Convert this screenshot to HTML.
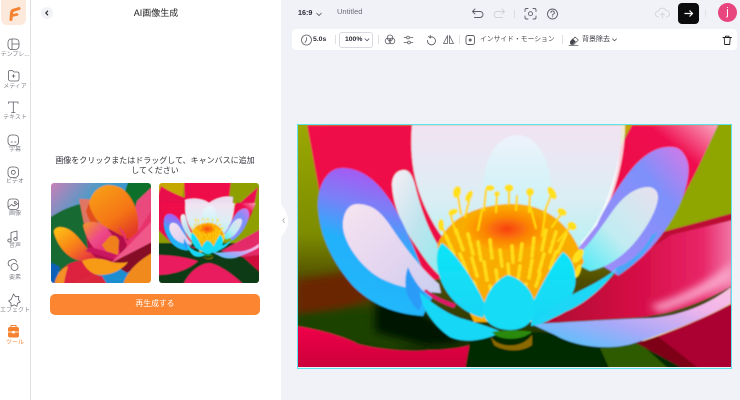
<!DOCTYPE html>
<html lang="ja"><head><meta charset="utf-8"><title>AI画像生成</title>
<style>
*{box-sizing:border-box}
html,body{margin:0;padding:0;width:740px;height:400px;overflow:hidden;background:#f1f2f7;font-family:"Liberation Sans","Noto Sans CJK JP",sans-serif;color:#222}
.abs{position:absolute}
#side{left:0;top:0;width:31px;height:400px;background:#fff;border-right:1.5px solid #dfe0e4}
#panel{left:31px;top:0;width:250px;height:400px;background:#fff}
.lbl{position:absolute;left:0;width:30px;text-align:center;font-size:6px;line-height:8px;color:#85878f;white-space:nowrap;overflow:hidden}
svg{position:absolute;overflow:visible}
.ic{fill:none;stroke:#5c5e66;stroke-width:.8;stroke-linecap:round;stroke-linejoin:round}
.t{position:absolute;white-space:nowrap}
.sep{position:absolute;width:1px;background:#dfe0e5}
</style></head><body>

<div class="abs" id="side"></div>
<div class="abs" id="panel"></div>

<!-- logo -->
<div class="abs" style="left:1px;top:0;width:25px;height:25px;background:#fde8dc;border-radius:0 0 6px 6px"></div>
<svg style="left:0;top:0" width="30" height="30"><path d="M11 19.500L11.600 12.500Q12 10.500 14 10L19 8.500" fill="none" stroke="#f58230" stroke-width="3" stroke-linecap="round"/><path d="M12 15.500L17 14.500" fill="none" stroke="#f58230" stroke-width="2.600" stroke-linecap="round"/></svg>

<!-- sidebar icons -->
<svg style="left:0;top:0" width="30" height="350" class="ic">
<rect x="8" y="39" width="11" height="10.500" rx="3.500"/><path d="M12 39v10.500M12 44h7"/>
<path d="M8.500 72a1.500 1.500 0 0 1 1.500-1.500h2.500l1.500 1.500h3.500a1.500 1.500 0 0 1 1.500 1.500v5.500a2 2 0 0 1-2 2h-6.500a2 2 0 0 1-2-2z"/><path d="M13.500 74.500v3M12 76h3"/>
<path d="M8.500 103.500v-1.500h9.500v1.500M13.300 102v10.500M11.500 112.500h3.600"/>
<rect x="8" y="135" width="10.500" height="10.500" rx="3.500"/><path d="M11 142h1.500M14.500 142h1.500"/>
<rect x="8" y="167" width="10.500" height="10.500" rx="3.500"/><circle cx="13.300" cy="172.300" r="2"/>
<rect x="8" y="199" width="10.500" height="10.500" rx="3"/><circle cx="15.200" cy="202.500" r="1"/><path d="M8.500 207l3-2.500 2.500 1.500 4-2.500"/>
<path d="M11 240v-7.500l6-1.500v7.500"/><ellipse cx="9.500" cy="240.500" rx="1.700" ry="1.500"/><ellipse cx="15.500" cy="239" rx="1.700" ry="1.500"/>
<path d="M9.500 266a3.200 3.200 0 0 1 1.500-5.800 3.300 3.300 0 0 1 5.500 1.800"/><circle cx="14.500" cy="267" r="3.500"/>
<path d="M13.500 294l2 2.800 3.300-.4-.3 3.300 1.800 2.300-2.800 1.300-.6 3-2.700-1.400-3.100 1.400-.2-3.200-2.300-2.100 2.600-1.600z"/>
</svg>
<svg style="left:0;top:0" width="30" height="350"><path d="M8 329a2 2 0 0 1 2-2h7a2 2 0 0 1 2 2v6.500a2 2 0 0 1-2 2h-7a2 2 0 0 1-2-2z" fill="#f58230"/><path d="M11 327v-1.500h5v1.500" fill="none" stroke="#f58230"/><path d="M8 332h11" stroke="#fff" stroke-width=".8"/><rect x="12.300" y="331" width="2.400" height="2.400" fill="#fff"/></svg>
<div class="lbl" style="top:51px">テンプレ...</div>
<div class="lbl" style="top:83px">メディア</div>
<div class="lbl" style="top:114px">テキスト</div>
<div class="lbl" style="top:146px">字幕</div>
<div class="lbl" style="top:178px">ビデオ</div>
<div class="lbl" style="top:210px">画像</div>
<div class="lbl" style="top:242px">音声</div>
<div class="lbl" style="top:274px">要素</div>
<div class="lbl" style="top:307px">エフェクト</div>
<div class="lbl" style="top:339px;color:#f58230">ツール</div>

<!-- panel -->
<div class="abs" style="left:41px;top:7px;width:12px;height:12px;border-radius:50%;background:#f1f2f6"></div>
<svg style="left:41px;top:7px" width="12" height="12"><path d="M7 3.800L4.800 6 7 8.200" fill="none" stroke="#222" stroke-width="1.100"/></svg>
<div class="t" style="left:31px;width:250px;top:7px;text-align:center;font-size:9px;line-height:12px;color:#222">AI画像生成</div>
<div class="t" style="left:52px;width:206px;top:156px;text-align:center;font-size:8px;line-height:10px;color:#33353b;white-space:normal">画像をクリックまたはドラッグして、キャンバスに追加してください</div>

<!-- thumb 1 -->
<svg style="left:51px;top:183px;border-radius:3px;overflow:hidden" width="100" height="100" viewBox="0 0 100 100">
<defs>
<linearGradient id="a1" x1="0" y1="0" x2=".7" y2=".6"><stop offset="0" stop-color="#d67cb8"/><stop offset=".45" stop-color="#4a9cc6"/><stop offset="1" stop-color="#1a8ed0"/></linearGradient>
<linearGradient id="a2" x1="0" y1="0" x2=".6" y2="1"><stop offset="0" stop-color="#f9a51c"/><stop offset=".65" stop-color="#f57414"/><stop offset="1" stop-color="#e23a28"/></linearGradient>
<linearGradient id="a3" x1="0" y1="0" x2="1" y2="1"><stop offset="0" stop-color="#ffc80f"/><stop offset=".5" stop-color="#f8801a"/><stop offset="1" stop-color="#e01c4c"/></linearGradient>
<linearGradient id="a4" x1="0" y1="0" x2="1" y2="1"><stop offset="0" stop-color="#f79a20"/><stop offset=".4" stop-color="#ee4a8a"/><stop offset="1" stop-color="#d8145e"/></linearGradient>
<linearGradient id="a5" x1="0" y1="0" x2="1" y2="1"><stop offset="0" stop-color="#e01c44"/><stop offset="1" stop-color="#d82a38"/></linearGradient>
<filter id="s1"><feGaussianBlur stdDeviation=".5"/></filter>
</defs>
<g filter="url(#s1)">
<rect x="-3" y="-3" width="106" height="106" fill="url(#a1)"/>
<path d="M78 -3h25v22L88 30 72 14z" fill="#0f6f2c"/>
<path d="M-3 36C8 28 22 22 34 20L44 60 30 80 10 90-3 78z" fill="#136b32"/>
<path d="M-3 78l12 6-6 19h-6z" fill="#0f60b8"/>
<path d="M28 16c4 0 12 0 16 1L46 50 34 46z" fill="#df7664"/>
<path d="M34 44L86 48 90 78 40 88z" fill="#b00c48"/>
<path d="M103 2L86 18 80 40 84 62 103 50z" fill="#ea4a7e"/>
<path d="M56 2C46 4 41 10 38 20 40 32 48 42 60 47L84 60C91 42 87 20 73 7 68 3 62 2 56 2z" fill="url(#a2)"/>
<path d="M38 20c2 12 12 24 22 30l6 14c-12-6-28-22-31-36z" fill="#e2501f"/>
<path d="M32 42c8-6 20-3 26 6 6 8 10 18 12 24l-6 4c-14 0-28-14-32-34z" fill="url(#a4)"/>
<path d="M9 44c-4 0-7 3-6 6 3 12 14 28 30 28l14-2C34 68 26 44 9 44z" fill="url(#a3)"/>
<path d="M58 54c4-3 9-1 10 4l-1 14-12-4-4-6z" fill="#f0801c"/>
<path d="M68 44l8 18-6 14c-3 3-6 3-10 5 12 2 28-6 40-20V28L86 50 76 58C74 50 72 47 68 44z" fill="#e8306c"/>
<path d="M103 36L78 62 60 80c14 0 30-12 43-22z" fill="#f0588a"/>
<path d="M60 80l43-22v14L76 90z" fill="#860a28"/>
<path d="M31 78c8-4 20-3 30 1 6 1 12 1 16 0-6 8-16 13-28 13-8 0-15-6-18-14z" fill="#f79a18"/>
<path d="M3 103c2-14 14-26 28-25 4 8 10 14 20 15l6 10z" fill="url(#a5)"/>
<path d="M3 103c2-12 8-18 14-20-2 8-4 14-4 20z" fill="#f39028"/>
<path d="M72 103c1-10 12-24 31-34v34z" fill="#f08a1c"/>
<path d="M34 68l26 8 6-4-26-8z" fill="#c8145e"/>
</g>
</svg>

<!-- flower master -->
<svg width="0" height="0" style="position:absolute"><defs>
<filter id="soft" x="-5%" y="-5%" width="110%" height="110%"><feGaussianBlur stdDeviation=".7"/></filter>
<filter id="soft3" x="-50%" y="-50%" width="200%" height="200%"><feGaussianBlur stdDeviation="4"/></filter>
<linearGradient id="olive" x1="0" y1="0" x2="0" y2="1"><stop offset="0" stop-color="#9ba800"/><stop offset=".45" stop-color="#7b8c00"/><stop offset=".64" stop-color="#504c00"/><stop offset="1" stop-color="#042a02"/></linearGradient>
<linearGradient id="red1" x1="0" y1="0" x2="1" y2="1"><stop offset="0" stop-color="#f0104a"/><stop offset="1" stop-color="#ea0a46"/></linearGradient>
<linearGradient id="red2" x1="0" y1="0" x2="1" y2="0"><stop offset="0" stop-color="#a8052e"/><stop offset=".5" stop-color="#d40a44"/><stop offset=".85" stop-color="#e82668"/><stop offset="1" stop-color="#f27aa8"/></linearGradient>
<linearGradient id="redT" x1="0" y1="1" x2="1" y2="0"><stop offset="0" stop-color="#e4003e"/><stop offset=".75" stop-color="#f01050"/><stop offset="1" stop-color="#f9a8c4"/></linearGradient>
<linearGradient id="redB" x1="0" y1="0" x2="0" y2="1"><stop offset="0" stop-color="#f0044a"/><stop offset="1" stop-color="#c90638"/></linearGradient>
<linearGradient id="white" x1="0" y1="0" x2="0" y2="1"><stop offset="0" stop-color="#f2e2f2"/><stop offset=".55" stop-color="#dcedf4"/><stop offset="1" stop-color="#b0f2f2"/></linearGradient>
<linearGradient id="inner" x1="0" y1="0" x2="0" y2="1"><stop offset="0" stop-color="#eef2fb"/><stop offset="1" stop-color="#bdf3f5"/></linearGradient>
<linearGradient id="purpL" x1=".7" y1="0" x2=".5" y2="1"><stop offset="0" stop-color="#b54cf0"/><stop offset=".3" stop-color="#7a80f8"/><stop offset=".55" stop-color="#22b0fb"/><stop offset="1" stop-color="#1fb8fb"/></linearGradient>
<linearGradient id="purpR" x1="1" y1="0" x2="0" y2="1"><stop offset="0" stop-color="#d878e8"/><stop offset=".3" stop-color="#7d90fa"/><stop offset=".8" stop-color="#9a8cf8"/><stop offset="1" stop-color="#c088f0"/></linearGradient>
<linearGradient id="paleL" x1="0" y1="0" x2="1" y2="1"><stop offset="0" stop-color="#f6e4f0"/><stop offset=".6" stop-color="#e2d4f0"/><stop offset="1" stop-color="#c6cff0"/></linearGradient>
<linearGradient id="paleR" x1="1" y1="0" x2="0" y2="1"><stop offset="0" stop-color="#e8e0ee"/><stop offset=".55" stop-color="#c0ecf2"/><stop offset="1" stop-color="#40eaf6"/></linearGradient>
<linearGradient id="small" x1="0" y1="0" x2="1" y2="1"><stop offset="0" stop-color="#f7eef5"/><stop offset=".5" stop-color="#bfe4ee"/><stop offset="1" stop-color="#8debee"/></linearGradient>
<linearGradient id="band" x1="0" y1="1" x2="1" y2="0"><stop offset="0" stop-color="#3fc8fb"/><stop offset=".4" stop-color="#a9a8f8"/><stop offset=".75" stop-color="#f2b4ea"/><stop offset="1" stop-color="#fbc3e0"/></linearGradient>
<linearGradient id="cy" x1="0" y1="0" x2="0" y2="1"><stop offset="0" stop-color="#0ce4f8"/><stop offset="1" stop-color="#1ad6f5"/></linearGradient>
<radialGradient id="org" cx=".5" cy=".5" r=".5"><stop offset="0" stop-color="#f8400f"/><stop offset=".55" stop-color="#fb8505"/><stop offset="1" stop-color="#fca800"/></radialGradient>
<clipPath id="clipM"><rect x="298" y="125" width="433" height="242"/></clipPath>

<g id="flower">
<path d="M632 125h86l-21 45-22 42-16 25-40 1-40-20 30-50z" fill="url(#redT)"/>
<path d="M622 125h10l-8 12z" fill="#c9a200"/>
<path d="M307 125h112l40 150-50 10-50-45-40-50z" fill="url(#red1)"/>
<path d="M505 125h25l-14 8z" fill="#f0104a"/>
<path d="M412 125c-2 25 0 50 10 75 8 20 20 40 36 55l120-5c20-18 34-50 40-85 2-15 4-30 4-40z" fill="url(#white)"/>
<path d="M622 125c-1 30-8 60-22 90-5 10-12 20-20 28l2 1c10-10 18-20 23-30 13-30 20-60 20-89z" fill="#fff" opacity=".8"/>
<path d="M483 190c0-30 14-55 34-55s34 25 34 55c0 20-10 40-34 40s-34-20-34-40z" fill="url(#inner)"/>
<path d="M404 170c-8 0-12 7-12 15 1 20 10 42 22 58 7 10 14 22 25 32l6-20c-14-18-22-40-28-62-3-13-6-23-13-23z" fill="url(#small)"/>
<path d="M342 168c-15 0-25 18-24 40 2 30 15 55 35 78 18 18 40 28 70 30l10-20-20-50c-15-35-35-78-71-78z" fill="url(#purpL)"/>
<path d="M357 204C347 204 342 216 343 228 345 245 362 268 380 278 395 286 420 292 441 293L439 284C425 272 411 256 396 234 384 216 376 204 357 204z" fill="url(#paleL)"/>
<path d="M408 267c-3 8-3 16-2 24 3 9 7 14 13 20l6-18c-8-8-13-16-17-26z" fill="#2b9cf8"/>
<path d="M424 291c8 8 18 13 30 17l2-4c-10-3-22-8-30-15z" fill="#e01866"/>
<path d="M672 147c-15-1-30 8-45 28-12 16-25 38-30 50l-20 25 40 25c20-10 45-35 60-65 10-20 14-40 10-50-3-8-8-13-15-13z" fill="url(#purpR)"/>
<path d="M648 187c-10 0-22 6-34 22-10 14-22 32-32 42l-8 12 16 8c20-4 38-18 52-38 10-14 16-28 16-36 0-6-4-10-10-10z" fill="url(#paleR)"/>
<path d="M658 232c-10 18-22 32-40 44l-3-8c18-6 30-20 37-33z" fill="#3aacf8" opacity=".8"/>
<!-- stamens -->
<path d="M437 246c8-22 30-40 70-42 40-2 66 22 77 58l-40 60h-70z" fill="#f8ac04"/>
<ellipse cx="507" cy="229" rx="42" ry="22" fill="url(#org)"/>
<g stroke="#ffd60a" stroke-width="2.300" stroke-linecap="round" fill="none">
<path d="M458 192c0 5 1 12 3 22M470 197l-5 20M486 190l-2 20M497 192l-1 20M509 188v16M517 196l-1 14M530 192l-1 20M552 193l-8 20M562 213l-10 14M572 225l-14 16M450 212l6 22M441 224l8 20M482 210l-4 20M530 206l6 22M546 208l-4 28"/>
</g>
<g stroke="#ffdc14" stroke-width="3.600" stroke-linecap="round" stroke-dasharray="5 3" fill="none">
<path d="M446 236l8 18M456 230l7 20M468 234l5 20M478 242l3 18M490 240l2 18M500 250l2 16M512 246l1 16M522 244l-2 16M534 238l-2 18M546 230l-4 20M556 232l-6 20M566 234l-8 18M460 254l7 18M472 258l5 18M484 262l3 18M496 270l2 14M508 264l1 12M520 266l-2 14M532 260l-3 18M544 254l-5 18M556 252l-6 16M474 282l4 12M490 286l2 8M526 284l-2 8M540 274l-4 12"/>
</g>
<g fill="#ffe01a">
<ellipse cx="457" cy="192" rx="4" ry="6" transform="rotate(15 457 192)"/><ellipse cx="469" cy="196" rx="3" ry="6" transform="rotate(30 469 196)"/><ellipse cx="490" cy="188" rx="4.500" ry="3"/><ellipse cx="497" cy="194" rx="3" ry="2.500"/><ellipse cx="509" cy="188" rx="4.500" ry="3.800"/><ellipse cx="530" cy="192" rx="4" ry="4"/><ellipse cx="552" cy="193" rx="3.500" ry="7" transform="rotate(-30 552 193)"/><ellipse cx="562" cy="212" rx="5" ry="3.500" transform="rotate(30 562 212)"/><ellipse cx="572" cy="226" rx="5" ry="4" transform="rotate(30 572 226)"/><ellipse cx="453" cy="212" rx="5" ry="3" transform="rotate(-20 453 212)"/><ellipse cx="441" cy="225" rx="3" ry="6"/><ellipse cx="578" cy="256" rx="4" ry="8" transform="rotate(35 578 256)"/><ellipse cx="578" cy="271" rx="2.500" ry="7" transform="rotate(20 578 271)"/>
</g>
<!-- bottom band -->
<path d="M531 324c30-1 80-5 120-6 30-2 60-15 80-31v16c-25 15-60 28-96 40-25 8-60 4-80-8z" fill="url(#band)"/>
<!-- cyan petals -->
<path d="M442 243c-6 5-7 20-2 35 6 18 22 35 43 40l2-14c-10-22-28-50-43-61z" fill="url(#cy)"/>
<path d="M563 252c-8 8-20 30-30 50l-2 24c22-3 38-18 44-40 2-12-2-28-12-34z" fill="url(#cy)"/>
<path d="M618 267C610 280 590 302 565 312 555 318 545 322 532 324L562 300C580 290 605 280 618 267z" fill="#1bd7f6"/>
<path d="M420 292c1 16 14 34 30 45 16 7 36 3 52-5-12-5-28-10-42-14-16-6-30-16-40-26z" fill="#17d8f6"/>
<path d="M508 275c-12 4-24 20-25 36 1 12 13 19 27 19 14 0 25-8 25-22 0-15-12-29-27-33z" fill="#12dcf5"/>
<path d="M492 332c5 8 28 10 40 0-6-2-32-2-40 0z" fill="#2a8a10"/>
<path d="M490 335c5 12 30 16 42 0l0 10c-10 8-30 6-38 0z" fill="#8a6a00"/>
</g>
</defs></svg>

<!-- thumb 2 -->
<svg style="left:159px;top:183px;border-radius:3px;overflow:hidden" width="100" height="100" viewBox="0 0 100 100">
<defs><clipPath id="cT"><rect width="100" height="100"/></clipPath></defs>
<g clip-path="url(#cT)"><g filter="url(#s1)">
<rect x="-2" y="-2" width="104" height="104" fill="#8f9f00"/>
<path d="M-2-2h28l-4 24H-2z" fill="#c4a800"/>
<path d="M25-2h47l-3 26H26z" fill="#ef0a4a"/>
<path d="M2 3L-2 16v30l16 16 16-14 12-28C28 16 12 10 2 3z" fill="#e80c4c"/>
<path d="M99 4L72 28 74 50 88 36 96 18z" fill="#ea1050"/>
<path d="M-2 60h104v42H-2z" fill="#0e3a12"/>
<path d="M-2 72c14 0 28 2 41 6-8 8-24 14-41 14z" fill="#ea1a5e"/>
<path d="M24 102c6-14 18-22 27-22 10 2 24 12 34 22z" fill="#e81c5e"/>
<path d="M102 46L62 68l22 6 18-2z" fill="#e42a68"/>
<path d="M102 72v18l-18-16z" fill="#cf0a3e"/>
<path d="M26 17C35 14 45 16 50 20 55 16 65 12 74 14L72 44 62 50H38L28 44z" fill="#ecdcf0"/>
</g>
<g filter="url(#s1)"><g transform="translate(0 20) scale(.2309 .25) translate(-298 -125)"><use href="#flower"/></g></g>
</g>
</svg>

<!-- regenerate button -->
<div class="abs" style="left:50px;top:294px;width:210px;height:21px;background:#fb8530;border-radius:5px;color:#fff;font-size:7.800px;line-height:20px;text-align:center">再生成する</div>

<!-- collapse handle -->
<svg style="left:281px;top:204px" width="8" height="34"><path d="M0 0c2 4 7 8 7 17s-5 13-7 17z" fill="#fff"/><path d="M3.500 14L1.800 16.500l1.700 2.500" fill="none" stroke="#aaa" stroke-width=".8"/></svg>

<!-- top bar -->
<div class="t" style="left:298px;top:8px;font-size:7.200px;line-height:10px;font-weight:bold;color:#2a2c33">16:9</div>
<svg style="left:315px;top:10px" width="8" height="8"><path d="M1.500 3L4 5.500 6.500 3" fill="none" stroke="#555" stroke-width=".8"/></svg>
<div class="t" style="left:337px;top:7px;font-size:7.500px;line-height:10px;color:#6a6d76">Untitled</div>
<svg style="left:0;top:0" width="740" height="60" class="ic">
<g stroke-width=".9"><path d="M473 11.500h7a3 3 0 0 1 0 6h-5.500M475 9L472.500 11.500l2.500 2.500"/></g>
<g stroke="#c8cad0"><path d="M504 11.500h-7a3 3 0 0 0 0 6h5.500M502 9l2.500 2.500-2.500 2.500"/></g>
<path d="M514.500 10v8" stroke="#d5d6db"/>
<g stroke-width=".9"><path d="M525 11.500V10a1.500 1.500 0 0 1 1.500-1.500H528M533 8.500h1.500A1.500 1.500 0 0 1 536 10v1.500M536 16v1.500a1.500 1.500 0 0 1-1.500 1.500H533M528 19h-1.500a1.500 1.500 0 0 1-1.500-1.500V16"/><circle cx="530.500" cy="13.700" r="2"/></g>
<g stroke-width=".9"><circle cx="552.500" cy="14" r="5"/><path d="M550.900 12.600a1.700 1.700 0 1 1 2.400 1.600c-.6.300-.8.600-.8 1.100"/><path d="M552.500 16.700v.2"/></g>
<path d="M658.500 17a3 3 0 0 1 0-6 4 4 0 0 1 7.500-.5 3 3 0 0 1 .5 6.500M662.500 18v-4.500M660.500 15l2-2 2 2" stroke="#ced0d5"/>
<path d="M705.500 10v7" stroke="#dcdde2"/>
</svg>
<div class="abs" style="left:678px;top:3px;width:21px;height:21px;background:#0b0b0d;border-radius:4px"></div>
<svg style="left:678px;top:3px" width="21" height="21"><path d="M6.500 10.500h8M11.500 7.500l3 3-3 3" fill="none" stroke="#fff" stroke-width="1.200"/></svg>
<div class="abs" style="left:718px;top:3px;width:19px;height:19px;border-radius:50%;background:#e8457f;color:#fff;font-size:11px;line-height:18px;text-align:center">j</div>

<!-- toolbar -->
<div class="abs" style="left:292px;top:29px;width:445px;height:21px;background:#fff;border-radius:4px"></div>
<div class="t" style="left:313px;top:35px;font-size:6.800px;line-height:10px;font-weight:bold;color:#2a2c33">5.0s</div>
<div class="sep" style="left:335px;top:35px;height:9px"></div>
<div class="abs" style="left:339px;top:32px;width:34px;height:16px;border:1px solid #d9dae0;border-radius:3px"></div>
<div class="t" style="left:345px;top:35px;font-size:6.800px;line-height:10px;font-weight:bold;color:#2a2c33">100%</div>
<div class="sep" style="left:378px;top:35px;height:9px"></div>
<div class="sep" style="left:459px;top:35px;height:9px"></div>
<div class="t" style="left:480px;top:34px;font-size:6.800px;line-height:11px;color:#4a4c54">インサイド・モーション</div>
<div class="sep" style="left:562px;top:35px;height:9px"></div>
<div class="t" style="left:582px;top:34px;font-size:7px;line-height:11px;color:#3a3c44">背景除去</div>
<svg style="left:0;top:0" width="740" height="60" class="ic">
<circle cx="306.500" cy="40" r="5"/><path d="M306.500 37.500V40l-1.500 2.500"/>
<path d="M365 38.800l2 2 2-2" stroke-width=".8"/>
<circle cx="390" cy="37.800" r="2.800"/><circle cx="388" cy="41" r="2.800"/><circle cx="392" cy="41" r="2.800"/>
<path d="M404 37.500h2M410 37.500h3M404 42.500h3.500M411 42.500h2"/><circle cx="408" cy="37.500" r="1.400"/><circle cx="409" cy="42.500" r="1.400"/>
<path d="M428.500 36.500l2 1.500-.3-2.500M430.500 37a4 4 0 1 1-3 3.500" stroke-width=".9"/>
<path d="M447.500 35.500l-4 8h4zM449.500 35.500l4 8h-4z"/>
<rect x="466" y="35.500" width="8.500" height="9" rx="2" stroke-width=".9"/><circle cx="470.200" cy="40" r="1.500" fill="#666" stroke="none"/>
<path d="M571 41.500l4-4.500 3.300 3-4.500 4.500h-2.500zM569 45.500h9"/><path d="M570 41.500l2.500-3 3.300 3-3 3h-2.500z" fill="#44464d" stroke="none"/>
<path d="M612.500 38.800l2 2 2-2"/>
<path d="M723 37.500h8.500M725.500 37.500v-1.300h3.500v1.300M724.200 37.500l.5 7h5l.5-7" stroke="#222" stroke-width=".9"/>
</svg>

<!-- main image -->
<div class="abs" style="left:297px;top:124px;width:435px;height:245px;border:1px solid #5fe3ea"></div>
<svg style="left:0;top:0" width="740" height="400">
<g clip-path="url(#clipM)"><g filter="url(#soft)">
<rect x="296" y="123" width="437" height="247" fill="url(#olive)"/>
<path d="M700 123h33v112l-80 10-20-20 30-30z" fill="#8fa500"/>
<path d="M640 238l93-25v30l-80 15z" fill="#bd0a34"/>
<path d="M296 280l50-8 30 14-10 16-30 10-40 4z" fill="#6a2600" filter="url(#soft3)"/>
<path d="M296 316l60-8 30 2 60 30-60 10-50-10-40-12z" fill="#1c4200" filter="url(#soft3)"/>
<path d="M375 300l50 14 40 28-40 4-50-14z" fill="#021800" filter="url(#soft3)"/>
<path d="M296 326c27 4 52 12 62 18 25 6 50 8 70 6 20 0 40-3 50-8l-12 28H296z" fill="url(#redB)"/>
<path d="M470 342l40-10 30 0 100 14 52 24H465z" fill="#062c02"/>
<path d="M600 348l40-5 30 27h-60z" fill="#2f5a06"/>
<path d="M620 268c-15 20-50 42-88 56l110-7c30-3 65-16 91-32V220l-62 15z" fill="url(#red2)"/>
<path d="M650 306C680 298 710 280 733 262V280C712 292 685 304 660 312z" fill="#f9a0c6" filter="url(#soft3)"/>
<path d="M636 343l97-40v67h-40z" fill="#ab0530"/>
<path d="M636 343l20-8 45 35h-15z" fill="#7d0418"/>
<path d="M640 340c30-8 65-22 91-37l0 1c-28 15-60 28-88 37z" fill="#ffe9a0"/>
<use href="#flower"/>
</g></g></svg>

</body></html>
